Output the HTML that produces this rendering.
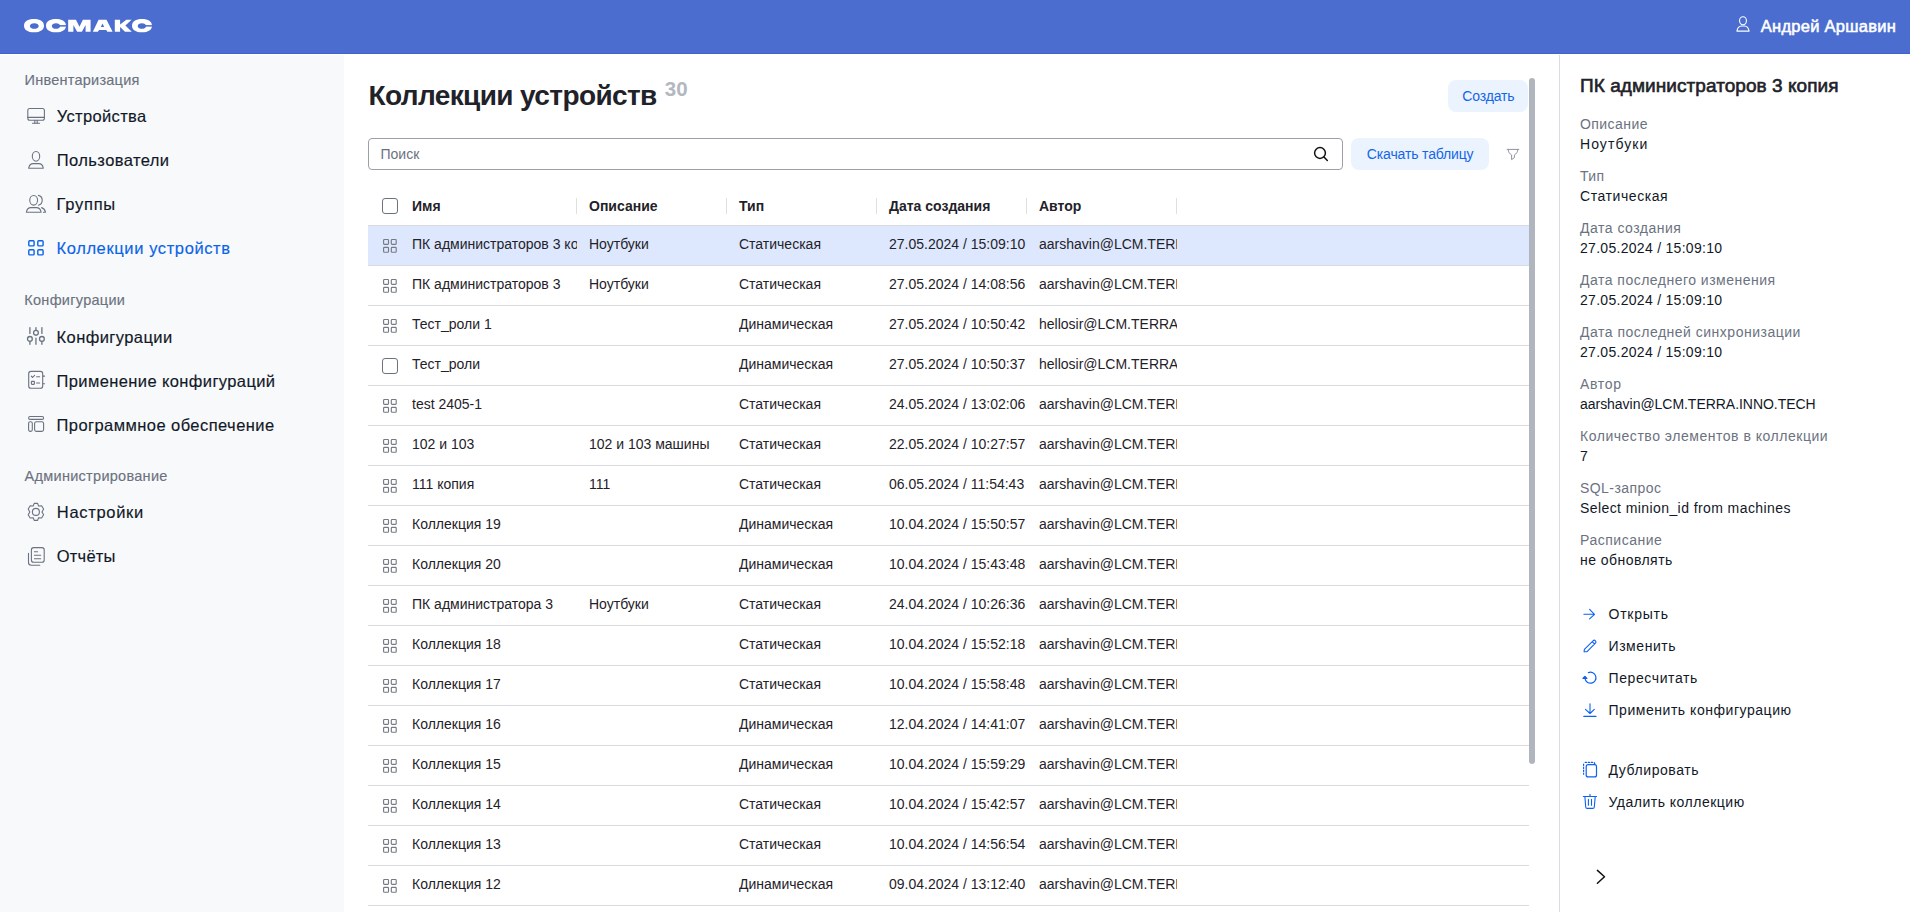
<!DOCTYPE html>
<html><head><meta charset="utf-8"><title>Коллекции устройств</title>
<style>
html,body{margin:0;padding:0;width:1910px;height:912px;overflow:hidden;background:#fff;font-family:"Liberation Sans", sans-serif}
.t{position:absolute;white-space:nowrap;line-height:1;font-family:"Liberation Sans", sans-serif}
.ic{position:absolute;overflow:visible}
</style></head><body>
<div style='position:absolute;left:0;top:0;width:1910px;height:53px;background:#4a6dcf;border-bottom:1px solid #3e63cc'></div>
<svg style='position:absolute;left:0;top:0;width:200px;height:53px' viewBox='0 0 200 53'><path fill='#fff' fill-rule='evenodd' d='M24.00 25.70 C24.00 21.61 27.80 19.10 34.00 19.10 C40.20 19.10 44.00 21.61 44.00 25.70 C44.00 29.79 40.20 32.30 34.00 32.30 C27.80 32.30 24.00 29.79 24.00 25.70 Z M29.90 26.00 C29.90 24.35 31.75 23.15 34.30 23.15 C36.85 23.15 38.70 24.35 38.70 26.00 C38.70 27.65 36.85 28.85 34.30 28.85 C31.75 28.85 29.90 27.65 29.90 26.00 Z '/><path fill='#fff' fill-rule='evenodd' d='M46.00 25.70 C46.00 21.61 49.80 19.10 56.00 19.10 C62.20 19.10 66.00 21.61 66.00 25.70 C66.00 29.79 62.20 32.30 56.00 32.30 C49.80 32.30 46.00 29.79 46.00 25.70 Z M51.80 26.00 C51.80 24.35 53.56 23.15 56.00 23.15 C58.44 23.15 60.20 24.35 60.20 26.00 C60.20 27.65 58.44 28.85 56.00 28.85 C53.56 28.85 51.80 27.65 51.80 26.00 Z '/><rect x='56' y='25.1' width='11' height='1.5' fill='#4a6dcf'/><path fill='#fff' d='M68.17 19.84 L75.95 19.84 L79.46 26.75 L82.86 19.84 L90.6 19.84 L90.6 31.8 L85.6 31.8 L85.6 25.0 L81.87 31.8 L77.16 31.8 L73.4 25.0 L73.4 31.8 L68.17 31.8 Z'/><path fill='#fff' fill-rule='evenodd' d='M92.8 31.8 L98.6 19.84 L106.5 19.84 L112.6 31.8 L107.3 31.8 L106.3 29.9 L99.0 29.9 L97.9 31.8 Z M100.8 27.1 L102.5 23.6 L104.2 27.1 Z'/><path fill='#fff' d='M114.8 19.84 L120.1 19.84 L120.1 24.4 L126.3 19.84 L131.6 19.84 L125.4 25.6 L131.8 31.8 L125 31.8 L120.1 27.1 L120.1 31.8 L114.8 31.8 Z'/><path fill='#fff' fill-rule='evenodd' d='M132.00 25.70 C132.00 21.61 135.80 19.10 142.00 19.10 C148.20 19.10 152.00 21.61 152.00 25.70 C152.00 29.79 148.20 32.30 142.00 32.30 C135.80 32.30 132.00 29.79 132.00 25.70 Z M137.70 26.00 C137.70 24.35 139.46 23.15 141.90 23.15 C144.34 23.15 146.10 24.35 146.10 26.00 C146.10 27.65 144.34 28.85 141.90 28.85 C139.46 28.85 137.70 27.65 137.70 26.00 Z '/><rect x='142' y='25.1' width='11' height='1.5' fill='#4a6dcf'/></svg>
<svg class='ic' style='left:1728px;top:10px;width:30px;height:30px' viewBox='0 0 30 30' fill='none' stroke='#ffffff' stroke-width='1.1' stroke-linecap='round' stroke-linejoin='round'><ellipse cx='15' cy='10.7' rx='3.45' ry='4.0'/><path d='M8.9 21.1 C9.4 18.2 11.4 16.1 13.4 16 L16.6 16 C18.6 16.1 20.6 18.2 21.1 21.1 Z'/></svg>
<div style='position:absolute;left:0;top:55px;width:344px;height:857px;background:#f8f9fb'></div>
<svg class='ic' style='left:22px;top:100px;width:30px;height:30px' viewBox='0 0 30 30' fill='none' stroke='#6b7280' stroke-width='1.1' stroke-linecap='round' stroke-linejoin='round'><rect x='5.8' y='8.5' width='16.6' height='11.8' rx='2'/><line x1='5.8' y1='17.4' x2='22.4' y2='17.4'/><path d='M12.8 20.3 V23.2 M15.2 20.3 V23.2'/><line x1='10.5' y1='23.3' x2='17.6' y2='23.3'/></svg>
<svg class='ic' style='left:22px;top:144px;width:30px;height:30px' viewBox='0 0 30 30' fill='none' stroke='#6b7280' stroke-width='1.1' stroke-linecap='round' stroke-linejoin='round'><ellipse cx='14' cy='12.35' rx='3.7' ry='4.85'/><path d='M6.7 24.2 C7.2 21.2 9.2 19.6 11.2 19.6 L16.8 19.6 C18.8 19.6 20.8 21.2 21.3 24.2 Z'/></svg>
<svg class='ic' style='left:22px;top:188px;width:30px;height:30px' viewBox='0 0 30 30' fill='none' stroke='#6b7280' stroke-width='1.1' stroke-linecap='round' stroke-linejoin='round'><ellipse cx='11.65' cy='12.3' rx='3.9' ry='4.85'/><path d='M16.4 7.4 C19 7.9 20.2 10 20.2 12.3 C20.2 14.6 19 16.7 16.4 17.2'/><path d='M4.4 24.2 C4.9 21.2 6.9 19.6 8.9 19.6 L14.4 19.6 C16.4 19.6 18.6 21.2 19.1 24.2 Z'/><path d='M19.6 19.6 C21.6 20.2 23 21.8 23.5 24.2 L21.4 24.2'/></svg>
<svg class='ic' style='left:22px;top:232px;width:30px;height:30px' viewBox='0 0 30 30' fill='none' stroke='#0b63e8' stroke-width='1.4' stroke-linecap='round' stroke-linejoin='round'><rect x='6.8' y='8.8' width='5.3' height='5.1' rx='0.9'/><rect x='15.8' y='8.8' width='5.3' height='5.1' rx='0.9'/><rect x='6.8' y='17.8' width='5.3' height='5.1' rx='0.9'/><rect x='15.8' y='17.8' width='5.3' height='5.1' rx='0.9'/></svg>
<svg class='ic' style='left:22px;top:320px;width:30px;height:30px' viewBox='0 0 30 30' fill='none' stroke='#6b7280' stroke-width='1.3' stroke-linecap='round' stroke-linejoin='round'><path d='M7.9 7.6 V13.4 M7.9 21.4 V24.3 M13.95 7.6 V10.3 M13.95 18.2 V24.3 M19.9 7.6 V13.4 M19.9 21.4 V24.3'/><circle cx='7.9' cy='18.9' r='2.4'/><circle cx='13.95' cy='12.85' r='2.4'/><circle cx='19.9' cy='18.9' r='2.4'/></svg>
<svg class='ic' style='left:22px;top:364px;width:30px;height:30px' viewBox='0 0 30 30' fill='none' stroke='#6b7280' stroke-width='1.1' stroke-linecap='round' stroke-linejoin='round'><rect x='6.7' y='7.4' width='14' height='16.8' rx='2.3'/><path d='M9.3 12.2 L10.6 13.5 L12.6 11.3'/><path d='M14.6 12.8 H17.6 M14.6 19 H17.6'/><rect x='9.4' y='17.4' width='3' height='3' rx='0.6'/><path d='M20.8 12.1 H22.6 M20.8 19.7 H22.6'/></svg>
<svg class='ic' style='left:22px;top:408px;width:30px;height:30px' viewBox='0 0 30 30' fill='none' stroke='#6b7280' stroke-width='1.1' stroke-linecap='round' stroke-linejoin='round'><rect x='6.6' y='8.5' width='15' height='2.9' rx='1.4'/><rect x='6.6' y='13.7' width='3.7' height='9.7' rx='1.6'/><rect x='12.6' y='13.7' width='9' height='9.7' rx='1.8'/></svg>
<svg class='ic' style='left:22px;top:496px;width:30px;height:30px' viewBox='0 0 30 30' fill='none' stroke='#6b7280' stroke-width='1.1' stroke-linecap='round' stroke-linejoin='round'><path d='M12.2 7.4 H15.6 L16.6 10 L19.6 9.8 L21.6 13 L20 15.9 L21.6 18.8 L19.6 22 L16.6 21.8 L15.6 24.4 H12.2 L11.2 21.8 L8.2 22 L6.2 18.8 L7.8 15.9 L6.2 13 L8.2 9.8 L11.2 10 Z'/><circle cx='13.9' cy='15.9' r='3.5'/></svg>
<svg class='ic' style='left:22px;top:540px;width:30px;height:30px' viewBox='0 0 30 30' fill='none' stroke='#6b7280' stroke-width='1.1' stroke-linecap='round' stroke-linejoin='round'><rect x='9.4' y='7.6' width='12.8' height='14.7' rx='2.3'/><path d='M12.4 11.7 H15.6 M12.4 15.3 H18.7 M12.4 18.8 H18.7'/><path d='M6.5 13.4 V22.6 C6.5 24.2 7.6 25.3 9.2 25.3 H17.8'/></svg>
<div style='position:absolute;left:1448px;top:80px;width:80px;height:32px;border-radius:8px;background:#ebf3fe'></div>
<div style='position:absolute;left:368px;top:138px;width:973px;height:30px;border:1px solid #9b9fa7;border-radius:4px;background:#fff'></div>
<svg class='ic' style='left:1305px;top:140px;width:30px;height:30px' viewBox='0 0 30 30' fill='none' stroke='#111111' stroke-width='1.5' stroke-linecap='round' stroke-linejoin='round'><circle cx='15' cy='13' r='5.4'/><path d='M19 17 L22.3 20.4'/></svg>
<div style='position:absolute;left:1351px;top:138px;width:138px;height:32px;border-radius:8px;background:#ebf3fe'></div>
<svg class='ic' style='left:1498px;top:140px;width:30px;height:30px' viewBox='0 0 30 30' fill='none' stroke='#8d939e' stroke-width='1.0' stroke-linecap='round' stroke-linejoin='round'><path d='M9.2 9.4 H20.8 M10.2 9.6 C10.2 12.2 11.6 13.6 13.6 15 V19.6 L16.4 17.6 V15 C18.4 13.6 19.8 12.2 19.8 9.6'/></svg>
<div style='position:absolute;left:382px;top:198px;width:14px;height:14px;border:1px solid #6b7280;border-radius:3px;background:#fff'></div>
<div style='position:absolute;left:576px;top:198px;width:1px;height:16px;background:#dcdfe4'></div>
<div style='position:absolute;left:726px;top:198px;width:1px;height:16px;background:#dcdfe4'></div>
<div style='position:absolute;left:876px;top:198px;width:1px;height:16px;background:#dcdfe4'></div>
<div style='position:absolute;left:1026px;top:198px;width:1px;height:16px;background:#dcdfe4'></div>
<div style='position:absolute;left:1176px;top:198px;width:1px;height:16px;background:#dcdfe4'></div>
<div style='position:absolute;left:368px;top:225px;width:1161px;height:1px;background:#d9dade'></div>
<div style='position:absolute;left:368px;top:226px;width:1161px;height:39px;background:#dde8fe'></div>
<div style='position:absolute;left:368px;top:265px;width:1161px;height:1px;background:#d9dade'></div>
<svg class='ic' style='left:375px;top:230px;width:30px;height:30px' viewBox='0 0 30 30' fill='none' stroke='#757a85' stroke-width='1.15' stroke-linecap='round' stroke-linejoin='round'><rect x='8.6' y='9.5' width='4.9' height='4.8' rx='0.8'/><rect x='16.3' y='9.5' width='4.9' height='4.8' rx='0.8'/><rect x='8.6' y='17.4' width='4.9' height='4.8' rx='0.8'/><rect x='16.3' y='17.4' width='4.9' height='4.8' rx='0.8'/></svg>
<div class='t' style='left:412px;top:234.35px;width:165px;overflow:hidden;font-size:14px;line-height:20px;color:#1f2229'>ПК администраторов 3 копия</div>
<div class='t' style='left:589px;top:234.35px;width:138px;overflow:hidden;font-size:14px;line-height:20px;color:#1f2229'>Ноутбуки</div>
<div class='t' style='left:739px;top:234.35px;width:138px;overflow:hidden;font-size:14px;line-height:20px;color:#1f2229'>Статическая</div>
<div class='t' style='left:889px;top:234.35px;width:138px;overflow:hidden;font-size:14px;line-height:20px;color:#1f2229'>27.05.2024 / 15:09:10</div>
<div class='t' style='left:1039px;top:234.35px;width:138px;overflow:hidden;font-size:14px;line-height:20px;color:#1f2229'>aarshavin@LCM.TERRA.INNO.TECH</div>
<div style='position:absolute;left:368px;top:305px;width:1161px;height:1px;background:#d9dade'></div>
<svg class='ic' style='left:375px;top:270px;width:30px;height:30px' viewBox='0 0 30 30' fill='none' stroke='#757a85' stroke-width='1.15' stroke-linecap='round' stroke-linejoin='round'><rect x='8.6' y='9.5' width='4.9' height='4.8' rx='0.8'/><rect x='16.3' y='9.5' width='4.9' height='4.8' rx='0.8'/><rect x='8.6' y='17.4' width='4.9' height='4.8' rx='0.8'/><rect x='16.3' y='17.4' width='4.9' height='4.8' rx='0.8'/></svg>
<div class='t' style='left:412px;top:274.35px;width:165px;overflow:hidden;font-size:14px;line-height:20px;color:#1f2229'>ПК администраторов 3</div>
<div class='t' style='left:589px;top:274.35px;width:138px;overflow:hidden;font-size:14px;line-height:20px;color:#1f2229'>Ноутбуки</div>
<div class='t' style='left:739px;top:274.35px;width:138px;overflow:hidden;font-size:14px;line-height:20px;color:#1f2229'>Статическая</div>
<div class='t' style='left:889px;top:274.35px;width:138px;overflow:hidden;font-size:14px;line-height:20px;color:#1f2229'>27.05.2024 / 14:08:56</div>
<div class='t' style='left:1039px;top:274.35px;width:138px;overflow:hidden;font-size:14px;line-height:20px;color:#1f2229'>aarshavin@LCM.TERRA.INNO.TECH</div>
<div style='position:absolute;left:368px;top:345px;width:1161px;height:1px;background:#d9dade'></div>
<svg class='ic' style='left:375px;top:310px;width:30px;height:30px' viewBox='0 0 30 30' fill='none' stroke='#757a85' stroke-width='1.15' stroke-linecap='round' stroke-linejoin='round'><rect x='8.6' y='9.5' width='4.9' height='4.8' rx='0.8'/><rect x='16.3' y='9.5' width='4.9' height='4.8' rx='0.8'/><rect x='8.6' y='17.4' width='4.9' height='4.8' rx='0.8'/><rect x='16.3' y='17.4' width='4.9' height='4.8' rx='0.8'/></svg>
<div class='t' style='left:412px;top:314.35px;width:165px;overflow:hidden;font-size:14px;line-height:20px;color:#1f2229'>Тест_роли 1</div>
<div class='t' style='left:739px;top:314.35px;width:138px;overflow:hidden;font-size:14px;line-height:20px;color:#1f2229'>Динамическая</div>
<div class='t' style='left:889px;top:314.35px;width:138px;overflow:hidden;font-size:14px;line-height:20px;color:#1f2229'>27.05.2024 / 10:50:42</div>
<div class='t' style='left:1039px;top:314.35px;width:138px;overflow:hidden;font-size:14px;line-height:20px;color:#1f2229'>hellosir@LCM.TERRA.INNO.TECH</div>
<div style='position:absolute;left:368px;top:385px;width:1161px;height:1px;background:#d9dade'></div>
<div style='position:absolute;left:382px;top:358px;width:14px;height:14px;border:1px solid #6b7280;border-radius:3px;background:#fff'></div>
<div class='t' style='left:412px;top:354.35px;width:165px;overflow:hidden;font-size:14px;line-height:20px;color:#1f2229'>Тест_роли</div>
<div class='t' style='left:739px;top:354.35px;width:138px;overflow:hidden;font-size:14px;line-height:20px;color:#1f2229'>Динамическая</div>
<div class='t' style='left:889px;top:354.35px;width:138px;overflow:hidden;font-size:14px;line-height:20px;color:#1f2229'>27.05.2024 / 10:50:37</div>
<div class='t' style='left:1039px;top:354.35px;width:138px;overflow:hidden;font-size:14px;line-height:20px;color:#1f2229'>hellosir@LCM.TERRA.INNO.TECH</div>
<div style='position:absolute;left:368px;top:425px;width:1161px;height:1px;background:#d9dade'></div>
<svg class='ic' style='left:375px;top:390px;width:30px;height:30px' viewBox='0 0 30 30' fill='none' stroke='#757a85' stroke-width='1.15' stroke-linecap='round' stroke-linejoin='round'><rect x='8.6' y='9.5' width='4.9' height='4.8' rx='0.8'/><rect x='16.3' y='9.5' width='4.9' height='4.8' rx='0.8'/><rect x='8.6' y='17.4' width='4.9' height='4.8' rx='0.8'/><rect x='16.3' y='17.4' width='4.9' height='4.8' rx='0.8'/></svg>
<div class='t' style='left:412px;top:394.35px;width:165px;overflow:hidden;font-size:14px;line-height:20px;color:#1f2229'>test 2405-1</div>
<div class='t' style='left:739px;top:394.35px;width:138px;overflow:hidden;font-size:14px;line-height:20px;color:#1f2229'>Статическая</div>
<div class='t' style='left:889px;top:394.35px;width:138px;overflow:hidden;font-size:14px;line-height:20px;color:#1f2229'>24.05.2024 / 13:02:06</div>
<div class='t' style='left:1039px;top:394.35px;width:138px;overflow:hidden;font-size:14px;line-height:20px;color:#1f2229'>aarshavin@LCM.TERRA.INNO.TECH</div>
<div style='position:absolute;left:368px;top:465px;width:1161px;height:1px;background:#d9dade'></div>
<svg class='ic' style='left:375px;top:430px;width:30px;height:30px' viewBox='0 0 30 30' fill='none' stroke='#757a85' stroke-width='1.15' stroke-linecap='round' stroke-linejoin='round'><rect x='8.6' y='9.5' width='4.9' height='4.8' rx='0.8'/><rect x='16.3' y='9.5' width='4.9' height='4.8' rx='0.8'/><rect x='8.6' y='17.4' width='4.9' height='4.8' rx='0.8'/><rect x='16.3' y='17.4' width='4.9' height='4.8' rx='0.8'/></svg>
<div class='t' style='left:412px;top:434.35px;width:165px;overflow:hidden;font-size:14px;line-height:20px;color:#1f2229'>102 и 103</div>
<div class='t' style='left:589px;top:434.35px;width:138px;overflow:hidden;font-size:14px;line-height:20px;color:#1f2229'>102 и 103 машины</div>
<div class='t' style='left:739px;top:434.35px;width:138px;overflow:hidden;font-size:14px;line-height:20px;color:#1f2229'>Статическая</div>
<div class='t' style='left:889px;top:434.35px;width:138px;overflow:hidden;font-size:14px;line-height:20px;color:#1f2229'>22.05.2024 / 10:27:57</div>
<div class='t' style='left:1039px;top:434.35px;width:138px;overflow:hidden;font-size:14px;line-height:20px;color:#1f2229'>aarshavin@LCM.TERRA.INNO.TECH</div>
<div style='position:absolute;left:368px;top:505px;width:1161px;height:1px;background:#d9dade'></div>
<svg class='ic' style='left:375px;top:470px;width:30px;height:30px' viewBox='0 0 30 30' fill='none' stroke='#757a85' stroke-width='1.15' stroke-linecap='round' stroke-linejoin='round'><rect x='8.6' y='9.5' width='4.9' height='4.8' rx='0.8'/><rect x='16.3' y='9.5' width='4.9' height='4.8' rx='0.8'/><rect x='8.6' y='17.4' width='4.9' height='4.8' rx='0.8'/><rect x='16.3' y='17.4' width='4.9' height='4.8' rx='0.8'/></svg>
<div class='t' style='left:412px;top:474.35px;width:165px;overflow:hidden;font-size:14px;line-height:20px;color:#1f2229'>111 копия</div>
<div class='t' style='left:589px;top:474.35px;width:138px;overflow:hidden;font-size:14px;line-height:20px;color:#1f2229'>111</div>
<div class='t' style='left:739px;top:474.35px;width:138px;overflow:hidden;font-size:14px;line-height:20px;color:#1f2229'>Статическая</div>
<div class='t' style='left:889px;top:474.35px;width:138px;overflow:hidden;font-size:14px;line-height:20px;color:#1f2229'>06.05.2024 / 11:54:43</div>
<div class='t' style='left:1039px;top:474.35px;width:138px;overflow:hidden;font-size:14px;line-height:20px;color:#1f2229'>aarshavin@LCM.TERRA.INNO.TECH</div>
<div style='position:absolute;left:368px;top:545px;width:1161px;height:1px;background:#d9dade'></div>
<svg class='ic' style='left:375px;top:510px;width:30px;height:30px' viewBox='0 0 30 30' fill='none' stroke='#757a85' stroke-width='1.15' stroke-linecap='round' stroke-linejoin='round'><rect x='8.6' y='9.5' width='4.9' height='4.8' rx='0.8'/><rect x='16.3' y='9.5' width='4.9' height='4.8' rx='0.8'/><rect x='8.6' y='17.4' width='4.9' height='4.8' rx='0.8'/><rect x='16.3' y='17.4' width='4.9' height='4.8' rx='0.8'/></svg>
<div class='t' style='left:412px;top:514.35px;width:165px;overflow:hidden;font-size:14px;line-height:20px;color:#1f2229'>Коллекция 19</div>
<div class='t' style='left:739px;top:514.35px;width:138px;overflow:hidden;font-size:14px;line-height:20px;color:#1f2229'>Динамическая</div>
<div class='t' style='left:889px;top:514.35px;width:138px;overflow:hidden;font-size:14px;line-height:20px;color:#1f2229'>10.04.2024 / 15:50:57</div>
<div class='t' style='left:1039px;top:514.35px;width:138px;overflow:hidden;font-size:14px;line-height:20px;color:#1f2229'>aarshavin@LCM.TERRA.INNO.TECH</div>
<div style='position:absolute;left:368px;top:585px;width:1161px;height:1px;background:#d9dade'></div>
<svg class='ic' style='left:375px;top:550px;width:30px;height:30px' viewBox='0 0 30 30' fill='none' stroke='#757a85' stroke-width='1.15' stroke-linecap='round' stroke-linejoin='round'><rect x='8.6' y='9.5' width='4.9' height='4.8' rx='0.8'/><rect x='16.3' y='9.5' width='4.9' height='4.8' rx='0.8'/><rect x='8.6' y='17.4' width='4.9' height='4.8' rx='0.8'/><rect x='16.3' y='17.4' width='4.9' height='4.8' rx='0.8'/></svg>
<div class='t' style='left:412px;top:554.35px;width:165px;overflow:hidden;font-size:14px;line-height:20px;color:#1f2229'>Коллекция 20</div>
<div class='t' style='left:739px;top:554.35px;width:138px;overflow:hidden;font-size:14px;line-height:20px;color:#1f2229'>Динамическая</div>
<div class='t' style='left:889px;top:554.35px;width:138px;overflow:hidden;font-size:14px;line-height:20px;color:#1f2229'>10.04.2024 / 15:43:48</div>
<div class='t' style='left:1039px;top:554.35px;width:138px;overflow:hidden;font-size:14px;line-height:20px;color:#1f2229'>aarshavin@LCM.TERRA.INNO.TECH</div>
<div style='position:absolute;left:368px;top:625px;width:1161px;height:1px;background:#d9dade'></div>
<svg class='ic' style='left:375px;top:590px;width:30px;height:30px' viewBox='0 0 30 30' fill='none' stroke='#757a85' stroke-width='1.15' stroke-linecap='round' stroke-linejoin='round'><rect x='8.6' y='9.5' width='4.9' height='4.8' rx='0.8'/><rect x='16.3' y='9.5' width='4.9' height='4.8' rx='0.8'/><rect x='8.6' y='17.4' width='4.9' height='4.8' rx='0.8'/><rect x='16.3' y='17.4' width='4.9' height='4.8' rx='0.8'/></svg>
<div class='t' style='left:412px;top:594.35px;width:165px;overflow:hidden;font-size:14px;line-height:20px;color:#1f2229'>ПК администратора 3</div>
<div class='t' style='left:589px;top:594.35px;width:138px;overflow:hidden;font-size:14px;line-height:20px;color:#1f2229'>Ноутбуки</div>
<div class='t' style='left:739px;top:594.35px;width:138px;overflow:hidden;font-size:14px;line-height:20px;color:#1f2229'>Статическая</div>
<div class='t' style='left:889px;top:594.35px;width:138px;overflow:hidden;font-size:14px;line-height:20px;color:#1f2229'>24.04.2024 / 10:26:36</div>
<div class='t' style='left:1039px;top:594.35px;width:138px;overflow:hidden;font-size:14px;line-height:20px;color:#1f2229'>aarshavin@LCM.TERRA.INNO.TECH</div>
<div style='position:absolute;left:368px;top:665px;width:1161px;height:1px;background:#d9dade'></div>
<svg class='ic' style='left:375px;top:630px;width:30px;height:30px' viewBox='0 0 30 30' fill='none' stroke='#757a85' stroke-width='1.15' stroke-linecap='round' stroke-linejoin='round'><rect x='8.6' y='9.5' width='4.9' height='4.8' rx='0.8'/><rect x='16.3' y='9.5' width='4.9' height='4.8' rx='0.8'/><rect x='8.6' y='17.4' width='4.9' height='4.8' rx='0.8'/><rect x='16.3' y='17.4' width='4.9' height='4.8' rx='0.8'/></svg>
<div class='t' style='left:412px;top:634.35px;width:165px;overflow:hidden;font-size:14px;line-height:20px;color:#1f2229'>Коллекция 18</div>
<div class='t' style='left:739px;top:634.35px;width:138px;overflow:hidden;font-size:14px;line-height:20px;color:#1f2229'>Статическая</div>
<div class='t' style='left:889px;top:634.35px;width:138px;overflow:hidden;font-size:14px;line-height:20px;color:#1f2229'>10.04.2024 / 15:52:18</div>
<div class='t' style='left:1039px;top:634.35px;width:138px;overflow:hidden;font-size:14px;line-height:20px;color:#1f2229'>aarshavin@LCM.TERRA.INNO.TECH</div>
<div style='position:absolute;left:368px;top:705px;width:1161px;height:1px;background:#d9dade'></div>
<svg class='ic' style='left:375px;top:670px;width:30px;height:30px' viewBox='0 0 30 30' fill='none' stroke='#757a85' stroke-width='1.15' stroke-linecap='round' stroke-linejoin='round'><rect x='8.6' y='9.5' width='4.9' height='4.8' rx='0.8'/><rect x='16.3' y='9.5' width='4.9' height='4.8' rx='0.8'/><rect x='8.6' y='17.4' width='4.9' height='4.8' rx='0.8'/><rect x='16.3' y='17.4' width='4.9' height='4.8' rx='0.8'/></svg>
<div class='t' style='left:412px;top:674.35px;width:165px;overflow:hidden;font-size:14px;line-height:20px;color:#1f2229'>Коллекция 17</div>
<div class='t' style='left:739px;top:674.35px;width:138px;overflow:hidden;font-size:14px;line-height:20px;color:#1f2229'>Статическая</div>
<div class='t' style='left:889px;top:674.35px;width:138px;overflow:hidden;font-size:14px;line-height:20px;color:#1f2229'>10.04.2024 / 15:58:48</div>
<div class='t' style='left:1039px;top:674.35px;width:138px;overflow:hidden;font-size:14px;line-height:20px;color:#1f2229'>aarshavin@LCM.TERRA.INNO.TECH</div>
<div style='position:absolute;left:368px;top:745px;width:1161px;height:1px;background:#d9dade'></div>
<svg class='ic' style='left:375px;top:710px;width:30px;height:30px' viewBox='0 0 30 30' fill='none' stroke='#757a85' stroke-width='1.15' stroke-linecap='round' stroke-linejoin='round'><rect x='8.6' y='9.5' width='4.9' height='4.8' rx='0.8'/><rect x='16.3' y='9.5' width='4.9' height='4.8' rx='0.8'/><rect x='8.6' y='17.4' width='4.9' height='4.8' rx='0.8'/><rect x='16.3' y='17.4' width='4.9' height='4.8' rx='0.8'/></svg>
<div class='t' style='left:412px;top:714.35px;width:165px;overflow:hidden;font-size:14px;line-height:20px;color:#1f2229'>Коллекция 16</div>
<div class='t' style='left:739px;top:714.35px;width:138px;overflow:hidden;font-size:14px;line-height:20px;color:#1f2229'>Динамическая</div>
<div class='t' style='left:889px;top:714.35px;width:138px;overflow:hidden;font-size:14px;line-height:20px;color:#1f2229'>12.04.2024 / 14:41:07</div>
<div class='t' style='left:1039px;top:714.35px;width:138px;overflow:hidden;font-size:14px;line-height:20px;color:#1f2229'>aarshavin@LCM.TERRA.INNO.TECH</div>
<div style='position:absolute;left:368px;top:785px;width:1161px;height:1px;background:#d9dade'></div>
<svg class='ic' style='left:375px;top:750px;width:30px;height:30px' viewBox='0 0 30 30' fill='none' stroke='#757a85' stroke-width='1.15' stroke-linecap='round' stroke-linejoin='round'><rect x='8.6' y='9.5' width='4.9' height='4.8' rx='0.8'/><rect x='16.3' y='9.5' width='4.9' height='4.8' rx='0.8'/><rect x='8.6' y='17.4' width='4.9' height='4.8' rx='0.8'/><rect x='16.3' y='17.4' width='4.9' height='4.8' rx='0.8'/></svg>
<div class='t' style='left:412px;top:754.35px;width:165px;overflow:hidden;font-size:14px;line-height:20px;color:#1f2229'>Коллекция 15</div>
<div class='t' style='left:739px;top:754.35px;width:138px;overflow:hidden;font-size:14px;line-height:20px;color:#1f2229'>Динамическая</div>
<div class='t' style='left:889px;top:754.35px;width:138px;overflow:hidden;font-size:14px;line-height:20px;color:#1f2229'>10.04.2024 / 15:59:29</div>
<div class='t' style='left:1039px;top:754.35px;width:138px;overflow:hidden;font-size:14px;line-height:20px;color:#1f2229'>aarshavin@LCM.TERRA.INNO.TECH</div>
<div style='position:absolute;left:368px;top:825px;width:1161px;height:1px;background:#d9dade'></div>
<svg class='ic' style='left:375px;top:790px;width:30px;height:30px' viewBox='0 0 30 30' fill='none' stroke='#757a85' stroke-width='1.15' stroke-linecap='round' stroke-linejoin='round'><rect x='8.6' y='9.5' width='4.9' height='4.8' rx='0.8'/><rect x='16.3' y='9.5' width='4.9' height='4.8' rx='0.8'/><rect x='8.6' y='17.4' width='4.9' height='4.8' rx='0.8'/><rect x='16.3' y='17.4' width='4.9' height='4.8' rx='0.8'/></svg>
<div class='t' style='left:412px;top:794.35px;width:165px;overflow:hidden;font-size:14px;line-height:20px;color:#1f2229'>Коллекция 14</div>
<div class='t' style='left:739px;top:794.35px;width:138px;overflow:hidden;font-size:14px;line-height:20px;color:#1f2229'>Статическая</div>
<div class='t' style='left:889px;top:794.35px;width:138px;overflow:hidden;font-size:14px;line-height:20px;color:#1f2229'>10.04.2024 / 15:42:57</div>
<div class='t' style='left:1039px;top:794.35px;width:138px;overflow:hidden;font-size:14px;line-height:20px;color:#1f2229'>aarshavin@LCM.TERRA.INNO.TECH</div>
<div style='position:absolute;left:368px;top:865px;width:1161px;height:1px;background:#d9dade'></div>
<svg class='ic' style='left:375px;top:830px;width:30px;height:30px' viewBox='0 0 30 30' fill='none' stroke='#757a85' stroke-width='1.15' stroke-linecap='round' stroke-linejoin='round'><rect x='8.6' y='9.5' width='4.9' height='4.8' rx='0.8'/><rect x='16.3' y='9.5' width='4.9' height='4.8' rx='0.8'/><rect x='8.6' y='17.4' width='4.9' height='4.8' rx='0.8'/><rect x='16.3' y='17.4' width='4.9' height='4.8' rx='0.8'/></svg>
<div class='t' style='left:412px;top:834.35px;width:165px;overflow:hidden;font-size:14px;line-height:20px;color:#1f2229'>Коллекция 13</div>
<div class='t' style='left:739px;top:834.35px;width:138px;overflow:hidden;font-size:14px;line-height:20px;color:#1f2229'>Статическая</div>
<div class='t' style='left:889px;top:834.35px;width:138px;overflow:hidden;font-size:14px;line-height:20px;color:#1f2229'>10.04.2024 / 14:56:54</div>
<div class='t' style='left:1039px;top:834.35px;width:138px;overflow:hidden;font-size:14px;line-height:20px;color:#1f2229'>aarshavin@LCM.TERRA.INNO.TECH</div>
<div style='position:absolute;left:368px;top:905px;width:1161px;height:1px;background:#d9dade'></div>
<svg class='ic' style='left:375px;top:870px;width:30px;height:30px' viewBox='0 0 30 30' fill='none' stroke='#757a85' stroke-width='1.15' stroke-linecap='round' stroke-linejoin='round'><rect x='8.6' y='9.5' width='4.9' height='4.8' rx='0.8'/><rect x='16.3' y='9.5' width='4.9' height='4.8' rx='0.8'/><rect x='8.6' y='17.4' width='4.9' height='4.8' rx='0.8'/><rect x='16.3' y='17.4' width='4.9' height='4.8' rx='0.8'/></svg>
<div class='t' style='left:412px;top:874.35px;width:165px;overflow:hidden;font-size:14px;line-height:20px;color:#1f2229'>Коллекция 12</div>
<div class='t' style='left:739px;top:874.35px;width:138px;overflow:hidden;font-size:14px;line-height:20px;color:#1f2229'>Динамическая</div>
<div class='t' style='left:889px;top:874.35px;width:138px;overflow:hidden;font-size:14px;line-height:20px;color:#1f2229'>09.04.2024 / 13:12:40</div>
<div class='t' style='left:1039px;top:874.35px;width:138px;overflow:hidden;font-size:14px;line-height:20px;color:#1f2229'>aarshavin@LCM.TERRA.INNO.TECH</div>
<div style='position:absolute;left:1529px;top:78px;width:6px;height:686px;border-radius:3px;background:#b1b5bd'></div>
<div style='position:absolute;left:1559px;top:55px;width:1px;height:857px;background:#d9dce3'></div>
<svg class='ic' style='left:1575px;top:600px;width:30px;height:30px' viewBox='0 0 30 30' fill='none' stroke='#0d62f2' stroke-width='1.1' stroke-linecap='round' stroke-linejoin='round'><path d='M8.9 14.3 H19.5 M14.6 9.4 L19.5 14.3 L14.6 18.9'/></svg>
<svg class='ic' style='left:1575px;top:632px;width:30px;height:30px' viewBox='0 0 30 30' fill='none' stroke='#0d62f2' stroke-width='1.1' stroke-linecap='round' stroke-linejoin='round'><path d='M9.1 19.8 L9.4 17.4 L18 8.8 C18.7 8.1 19.7 8.1 20.4 8.8 C21.1 9.5 21.1 10.5 20.4 11.2 L11.8 19.8 Z M17.2 9.6 L19.6 12'/></svg>
<svg class='ic' style='left:1575px;top:664px;width:30px;height:30px' viewBox='0 0 30 30' fill='none' stroke='#0d62f2' stroke-width='1.2' stroke-linecap='round' stroke-linejoin='round'><path d='M13.4 8.6 A5.5 5.5 0 1 1 10 14.4'/><path d='M7.9 14.3 L9.9 12.3 L11.9 14.3 Z' fill='#0d62f2'/></svg>
<svg class='ic' style='left:1575px;top:696px;width:30px;height:30px' viewBox='0 0 30 30' fill='none' stroke='#0d62f2' stroke-width='1.1' stroke-linecap='round' stroke-linejoin='round'><path d='M15 7.7 V17.2 M10.5 13.3 L15 17.5 L19.3 13.3 M8.8 20.4 H21'/></svg>
<svg class='ic' style='left:1575px;top:755px;width:30px;height:30px' viewBox='0 0 30 30' fill='none' stroke='#0d62f2' stroke-width='1.2' stroke-linecap='round' stroke-linejoin='round'><rect x='11.2' y='9.7' width='10.3' height='12.2' rx='2'/><path d='M8.6 9.2 V19.2 M10.2 7.4 H19' stroke-dasharray='1.3 1.7'/><path d='M19.2 7.6 L20 9.4'/></svg>
<svg class='ic' style='left:1575px;top:787px;width:30px;height:30px' viewBox='0 0 30 30' fill='none' stroke='#0d62f2' stroke-width='1.1' stroke-linecap='round' stroke-linejoin='round'><path d='M8.3 9.5 H21.5 M15 7.3 V9.3 M9.9 10 L10.7 20 C10.8 20.9 11.3 21.4 12.2 21.4 H17.8 C18.7 21.4 19.2 20.9 19.3 20 L20.2 10 M13.4 12.4 V18.2 M16.5 12.4 V18.2'/></svg>
<svg class='ic' style='left:1585px;top:862px;width:30px;height:30px' viewBox='0 0 30 30' fill='none' stroke='#111111' stroke-width='1.5' stroke-linecap='round' stroke-linejoin='round'><path d='M12.4 8.4 L19.5 14.7 L12.4 21.2'/></svg>
<span class='t' style='left:1760.80px;top:18.23px;font-size:16.5px;font-weight:400;color:#ffffff;letter-spacing:0.269px;-webkit-text-stroke:0.55px #fff;'>Андрей Аршавин</span>
<span class='t' style='left:24.60px;top:72.63px;font-size:14.5px;font-weight:400;color:#6b7280;letter-spacing:0.231px;-webkit-text-stroke:0.15px currentColor;'>Инвентаризация</span>
<span class='t' style='left:56.80px;top:108.33px;font-size:16.5px;font-weight:400;color:#111827;letter-spacing:0.333px;-webkit-text-stroke:0.15px currentColor;'>Устройства</span>
<span class='t' style='left:56.80px;top:152.33px;font-size:16.5px;font-weight:400;color:#111827;letter-spacing:0.418px;-webkit-text-stroke:0.15px currentColor;'>Пользователи</span>
<span class='t' style='left:56.50px;top:196.33px;font-size:16.5px;font-weight:400;color:#111827;letter-spacing:0.740px;-webkit-text-stroke:0.15px currentColor;'>Группы</span>
<span class='t' style='left:56.50px;top:240.33px;font-size:16.5px;font-weight:400;color:#0b63e8;letter-spacing:0.611px;-webkit-text-stroke:0.15px currentColor;'>Коллекции устройств</span>
<span class='t' style='left:24.30px;top:293.03px;font-size:14.5px;font-weight:400;color:#6b7280;letter-spacing:0.273px;-webkit-text-stroke:0.15px currentColor;'>Конфигурации</span>
<span class='t' style='left:56.50px;top:328.93px;font-size:16.5px;font-weight:400;color:#111827;letter-spacing:0.427px;-webkit-text-stroke:0.15px currentColor;'>Конфигурации</span>
<span class='t' style='left:56.50px;top:372.93px;font-size:16.5px;font-weight:400;color:#111827;letter-spacing:0.391px;-webkit-text-stroke:0.15px currentColor;'>Применение конфигураций</span>
<span class='t' style='left:56.50px;top:416.83px;font-size:16.5px;font-weight:400;color:#111827;letter-spacing:0.436px;-webkit-text-stroke:0.15px currentColor;'>Программное обеспечение</span>
<span class='t' style='left:24.60px;top:468.53px;font-size:14.5px;font-weight:400;color:#6b7280;letter-spacing:0.281px;-webkit-text-stroke:0.15px currentColor;'>Администрирование</span>
<span class='t' style='left:56.80px;top:504.23px;font-size:16.5px;font-weight:400;color:#111827;letter-spacing:0.688px;-webkit-text-stroke:0.15px currentColor;'>Настройки</span>
<span class='t' style='left:56.80px;top:548.23px;font-size:16.5px;font-weight:400;color:#111827;letter-spacing:0.200px;-webkit-text-stroke:0.15px currentColor;'>Отчёты</span>
<span class='t' style='left:368.50px;top:81.50px;font-size:28px;font-weight:700;color:#1f2229;letter-spacing:-0.611px;'>Коллекции устройств</span>
<span class='t' style='left:664.80px;top:79.35px;font-size:20.5px;font-weight:700;color:#b3b7bf;letter-spacing:0.000px;'>30</span>
<span class='t' style='left:1462.30px;top:89.15px;font-size:14px;font-weight:400;color:#1366e8;letter-spacing:-0.167px;'>Создать</span>
<span class='t' style='left:380.50px;top:147.15px;font-size:14px;font-weight:400;color:#6b7280;'>Поиск</span>
<span class='t' style='left:1366.80px;top:147.15px;font-size:14px;font-weight:400;color:#1366e8;letter-spacing:-0.143px;'>Скачать таблицу</span>
<span class='t' style='left:412.00px;top:199.15px;font-size:14px;font-weight:700;color:#1f2229;'>Имя</span>
<span class='t' style='left:589.00px;top:199.15px;font-size:14px;font-weight:700;color:#1f2229;'>Описание</span>
<span class='t' style='left:739.00px;top:199.15px;font-size:14px;font-weight:700;color:#1f2229;'>Тип</span>
<span class='t' style='left:889.00px;top:199.15px;font-size:14px;font-weight:700;color:#1f2229;'>Дата создания</span>
<span class='t' style='left:1039.00px;top:199.15px;font-size:14px;font-weight:700;color:#1f2229;'>Автор</span>
<span class='t' style='left:1580.00px;top:76.32px;font-size:19px;font-weight:400;color:#1f2229;letter-spacing:0.060px;-webkit-text-stroke:0.6px #1f2229;'>ПК администраторов 3 копия</span>
<span class='t' style='left:1580.00px;top:117.25px;font-size:14px;font-weight:400;color:#6b7280;letter-spacing:0.443px;'>Описание</span>
<span class='t' style='left:1580.00px;top:137.15px;font-size:14px;font-weight:400;color:#111827;letter-spacing:1.057px;'>Ноутбуки</span>
<span class='t' style='left:1580.00px;top:169.25px;font-size:14px;font-weight:400;color:#6b7280;letter-spacing:0.350px;'>Тип</span>
<span class='t' style='left:1580.00px;top:189.15px;font-size:14px;font-weight:400;color:#111827;letter-spacing:0.570px;'>Статическая</span>
<span class='t' style='left:1580.00px;top:221.25px;font-size:14px;font-weight:400;color:#6b7280;letter-spacing:0.500px;'>Дата создания</span>
<span class='t' style='left:1580.00px;top:241.15px;font-size:14px;font-weight:400;color:#111827;letter-spacing:0.290px;'>27.05.2024 / 15:09:10</span>
<span class='t' style='left:1580.00px;top:273.25px;font-size:14px;font-weight:400;color:#6b7280;letter-spacing:0.487px;'>Дата последнего изменения</span>
<span class='t' style='left:1580.00px;top:293.15px;font-size:14px;font-weight:400;color:#111827;letter-spacing:0.290px;'>27.05.2024 / 15:09:10</span>
<span class='t' style='left:1580.00px;top:325.25px;font-size:14px;font-weight:400;color:#6b7280;letter-spacing:0.500px;'>Дата последней синхронизации</span>
<span class='t' style='left:1580.00px;top:345.15px;font-size:14px;font-weight:400;color:#111827;letter-spacing:0.290px;'>27.05.2024 / 15:09:10</span>
<span class='t' style='left:1580.00px;top:377.25px;font-size:14px;font-weight:400;color:#6b7280;letter-spacing:0.700px;'>Автор</span>
<span class='t' style='left:1580.00px;top:397.15px;font-size:14px;font-weight:400;color:#111827;letter-spacing:-0.036px;'>aarshavin@LCM.TERRA.INNO.TECH</span>
<span class='t' style='left:1580.00px;top:429.25px;font-size:14px;font-weight:400;color:#6b7280;letter-spacing:0.526px;'>Количество элементов в коллекции</span>
<span class='t' style='left:1580.00px;top:449.15px;font-size:14px;font-weight:400;color:#111827;'>7</span>
<span class='t' style='left:1580.00px;top:481.25px;font-size:14px;font-weight:400;color:#6b7280;letter-spacing:0.444px;'>SQL-запрос</span>
<span class='t' style='left:1580.00px;top:501.15px;font-size:14px;font-weight:400;color:#111827;letter-spacing:0.414px;'>Select minion_id from machines</span>
<span class='t' style='left:1580.00px;top:533.25px;font-size:14px;font-weight:400;color:#6b7280;letter-spacing:0.522px;'>Расписание</span>
<span class='t' style='left:1580.00px;top:553.15px;font-size:14px;font-weight:400;color:#111827;letter-spacing:0.455px;'>не обновлять</span>
<span class='t' style='left:1608.50px;top:606.95px;font-size:14px;font-weight:400;color:#111827;letter-spacing:0.767px;'>Открыть</span>
<span class='t' style='left:1608.50px;top:638.95px;font-size:14px;font-weight:400;color:#111827;letter-spacing:0.571px;'>Изменить</span>
<span class='t' style='left:1608.50px;top:670.95px;font-size:14px;font-weight:400;color:#111827;letter-spacing:0.600px;'>Пересчитать</span>
<span class='t' style='left:1608.50px;top:702.95px;font-size:14px;font-weight:400;color:#111827;letter-spacing:0.538px;'>Применить конфигурацию</span>
<span class='t' style='left:1608.50px;top:762.95px;font-size:14px;font-weight:400;color:#111827;letter-spacing:0.560px;'>Дублировать</span>
<span class='t' style='left:1608.50px;top:794.95px;font-size:14px;font-weight:400;color:#111827;letter-spacing:0.500px;'>Удалить коллекцию</span>
</body></html>
